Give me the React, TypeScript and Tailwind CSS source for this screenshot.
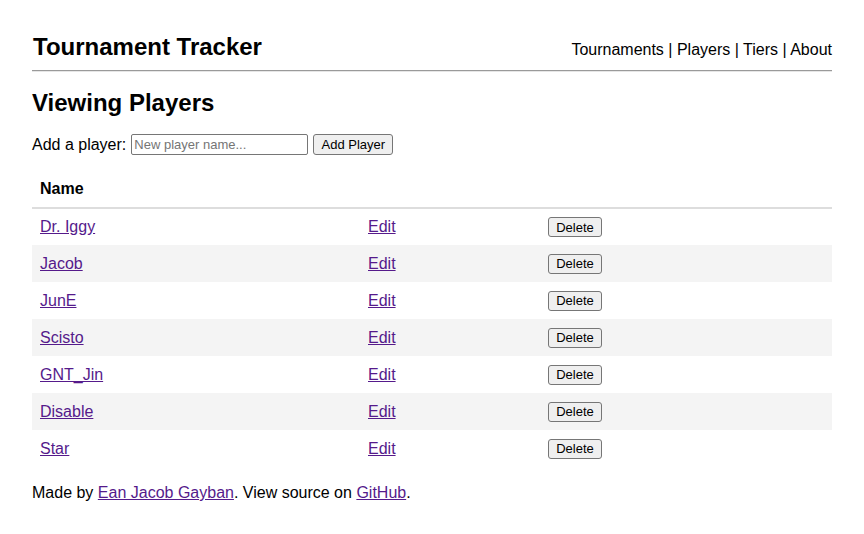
const players = ['Dr. Iggy', 'Jacob', 'JunE', 'Scisto', 'GNT_Jin', 'Disable', 'Star'];

const navLinks = ['Tournaments', 'Players', 'Tiers', 'About'];

export default function App() {
  return (
    <div className="min-h-[534px] bg-white font-['Liberation_Sans',Arial,sans-serif] text-[16px] text-black">
      <div className="mx-8 w-[800px] pt-[33px]">
        <header className="flex items-baseline justify-between">
          <h1 className="pl-px text-[24px] leading-[28px] font-bold">Tournament Tracker</h1>
          <nav className="leading-[18px]">
            {navLinks.map((l, i) => (
              <span key={l}>
                {i > 0 && ' | '}
                <a href="#" className="text-black no-underline">
                  {l}
                </a>
              </span>
            ))}
          </nav>
        </header>
        <div className="mt-[9px] border-t border-b border-t-[#9a9a9a] border-b-[#e6e6e6]" />

        <h2 className="mt-[17px] text-[24px] leading-[28px] font-bold">Viewing Players</h2>

        <form className="mt-[17px] flex h-[21px] items-center" onSubmit={e => e.preventDefault()}>
          <label className="leading-[18px]">Add a player:</label>
          <input
            type="text"
            placeholder="New player name..."
            className="ml-[5px] h-[21px] w-[177px] rounded-[2px] border border-[#767676] px-[2px] text-[13px] placeholder:text-[#757575] focus:outline-none"
          />
          <button
            type="submit"
            className="ml-[5px] h-[21px] w-[80px] rounded-[3px] border border-[#767676] bg-[#efefef] text-[13px] leading-none text-black"
          >
            Add Player
          </button>
        </form>

        <table className="mt-[17px] w-[800px] border-collapse">
          <thead>
            <tr className="border-b-2 border-[#dddddd]">
              <th className="w-[328px] px-2 pt-2 pb-[9px] text-left leading-[18px] font-bold">Name</th>
              <th className="w-[180px] px-2 pt-2 pb-[9px]" />
              <th className="px-2 pt-2 pb-[9px]" />
            </tr>
          </thead>
          <tbody>
            {players.map((p, i) => (
              <tr key={p} className={i % 2 === 1 ? 'bg-[#f4f4f4]' : 'bg-white'}>
                <td className="h-[37px] px-2 leading-[18px]">
                  <a href="#" className="text-[#551a8b] underline">
                    {p}
                  </a>
                </td>
                <td className="h-[37px] px-2 leading-[18px]">
                  <a href="#" className="text-[#551a8b] underline">
                    Edit
                  </a>
                </td>
                <td className="h-[37px] px-2">
                  <button
                    type="button"
                    className="flex h-[20px] w-[54px] items-center justify-center rounded-[3px] border border-[#767676] bg-[#efefef] text-[13px] leading-none text-black"
                  >
                    Delete
                  </button>
                </td>
              </tr>
            ))}
          </tbody>
        </table>

        <p className="mt-[17px] leading-[18px]">
          Made by{' '}
          <a href="#" className="text-[#551a8b] underline">
            Ean Jacob Gayban
          </a>
          . View source on{' '}
          <a href="#" className="text-[#551a8b] underline">
            GitHub
          </a>
          .
        </p>
      </div>
    </div>
  );
}
